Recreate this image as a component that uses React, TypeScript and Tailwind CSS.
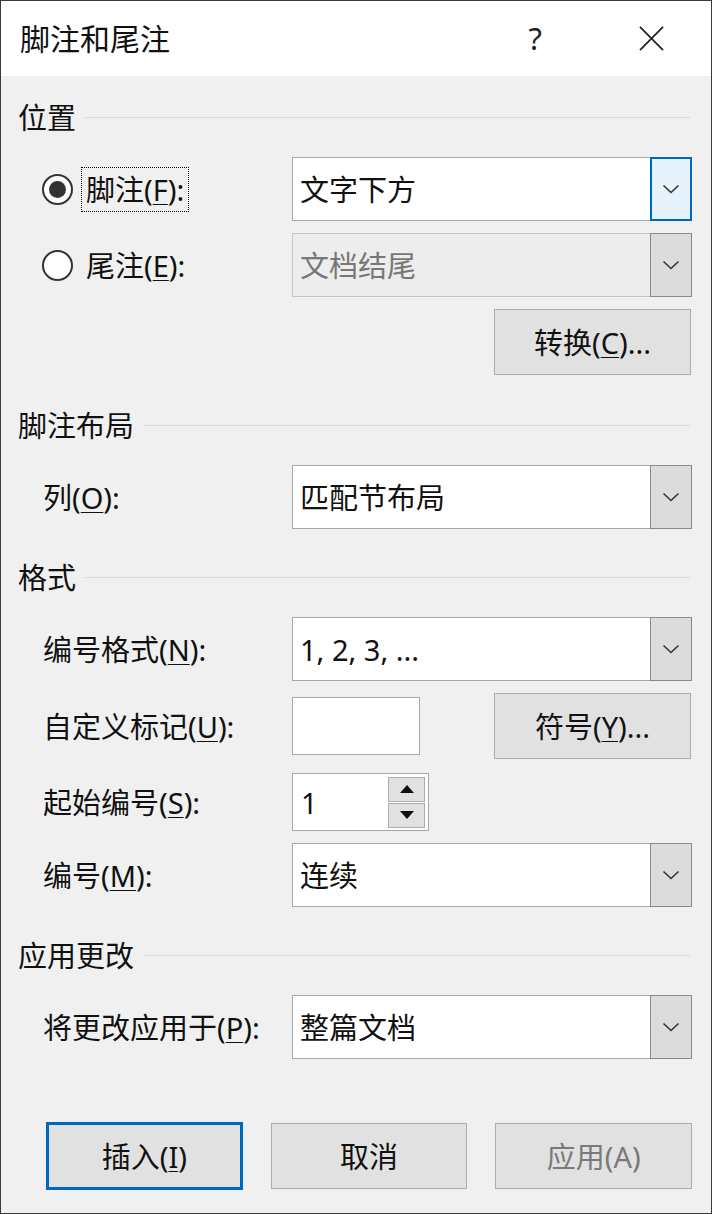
import React from 'react';

const Mn = ({ c }: { c: string }) => <span className="underline underline-offset-[3px] decoration-1">{c}</span>;

const Chevron = () => (
    <svg width="18" height="10" viewBox="0 0 18 10" fill="none">
        <path d="M1.5 1.5 L9 8.5 L16.5 1.5" stroke="#333" strokeWidth="1.6" />
    </svg>
);

const Header = ({ title, className }: { title: string; className?: string }) => (
    <div className={`flex items-center h-[40px] ${className ?? ''}`}>
        <span className="whitespace-nowrap">{title}</span>
        <div className="flex-1 h-px bg-[#d9d9d9] ml-[9px] mr-[2px]" />
    </div>
);

const Select = ({ value, disabled, active }: { value: string; disabled?: boolean; active?: boolean }) => (
    <div className={`flex w-[400px] h-[64px] border ${disabled ? 'border-[#c4c4c4] bg-[#ededed]' : 'border-[#a8a8a8] bg-white'}`}>
        <div className={`flex-1 flex items-center pl-[7px] ${disabled ? 'text-[#777]' : 'text-[#111]'}`}>{value}</div>
        {active ? (
            <div className="w-[42px] -my-px -mr-px flex items-center justify-center bg-[#e5f1fb] border-2 border-[#0067c0]">
                <Chevron />
            </div>
        ) : (
            <div className="w-[42px] -my-px -mr-px flex items-center justify-center bg-[#dcdcdc] border border-[#8a8a8a]">
                <Chevron />
            </div>
        )}
    </div>
);

const Row = ({ label, children, className }: { label: React.ReactNode; children: React.ReactNode; className?: string }) => (
    <div className={`flex items-center ${className ?? ''}`}>
        <div className="w-[274px] pl-[25px] whitespace-nowrap">{label}</div>
        {children}
    </div>
);

const Btn = ({ children, className }: { children: React.ReactNode; className?: string }) => (
    <div className={`w-[197px] h-[66px] flex items-center justify-center bg-[#e1e1e1] border border-[#adadad] ${className ?? ''}`}>
        {children}
    </div>
);

export default function App() {
    return (
        <div className="w-[712px] h-[1214px] border border-[#3a3a3a] bg-[#f0f0f0] flex flex-col text-[29px] leading-none text-[#111] font-['Noto_Sans','Noto_Sans_CJK_SC',sans-serif]">
            {/* title bar */}
            <div className="h-[75px] bg-white flex items-center pl-[19px] pr-[47px]">
                <span className="text-[30px] flex-1">脚注和尾注</span>
                <span className="text-[31px] mr-[97px] text-[#222]">?</span>
                <svg width="25" height="25" viewBox="0 0 26 26">
                    <path d="M1 1 L25 25 M25 1 L1 25" stroke="#222" strokeWidth="1.8" />
                </svg>
            </div>

            <div className="flex flex-col pl-[17px] pr-[19px]">
                <Header title="位置" className="mt-[21px]" />

                <div className="flex items-center mt-[20px]">
                    <div className="w-[274px] pl-[24px] flex items-center">
                        <div className="w-[31px] h-[31px] rounded-full border-2 border-[#333] bg-white flex items-center justify-center">
                            <div className="w-[17px] h-[17px] rounded-full bg-[#333]" />
                        </div>
                        <span className="ml-[8px] px-[4px] py-[7px] border border-dotted border-black">脚注(<Mn c="F" />):</span>
                    </div>
                    <Select value="文字下方" active />
                </div>

                <div className="flex items-center mt-[12px]">
                    <div className="w-[274px] pl-[24px] flex items-center">
                        <div className="w-[31px] h-[31px] rounded-full border-2 border-[#333] bg-white" />
                        <span className="ml-[13px]">尾注(<Mn c="E" />):</span>
                    </div>
                    <Select value="文档结尾" disabled />
                </div>

                <div className="flex justify-end mt-[12px] pr-px">
                    <Btn>转换(<Mn c="C" />)...</Btn>
                </div>

                <Header title="脚注布局" className="mt-[30px]" />
                <Row label={<>列(<Mn c="O" />):</>} className="mt-[20px]">
                    <Select value="匹配节布局" />
                </Row>

                <Header title="格式" className="mt-[28px]" />
                <Row label={<>编号格式(<Mn c="N" />):</>} className="mt-[20px]">
                    <Select value="1, 2, 3, ..." />
                </Row>

                <Row label={<>自定义标记(<Mn c="U" />):</>} className="mt-[12px]">
                    <div className="flex-1 flex items-center">
                        <div className="w-[128px] h-[58px] bg-white border border-[#a8a8a8]" />
                        <div className="flex-1" />
                        <Btn className="mr-px">符号(<Mn c="Y" />)...</Btn>
                    </div>
                </Row>

                <Row label={<>起始编号(<Mn c="S" />):</>} className="mt-[14px]">
                    <div className="w-[137px] h-[58px] bg-white border border-[#a8a8a8] flex items-center">
                        <span className="flex-1 pl-[8px]">1</span>
                        <div className="flex flex-col w-[37px] mr-[3px] gap-px">
                            <div className="h-[25px] bg-[#e1e1e1] border border-[#adadad] flex items-center justify-center">
                                <svg width="14" height="8" viewBox="0 0 14 8"><path d="M0 8 L7 0 L14 8 Z" fill="#111" /></svg>
                            </div>
                            <div className="h-[25px] bg-[#e1e1e1] border border-[#adadad] flex items-center justify-center">
                                <svg width="14" height="8" viewBox="0 0 14 8"><path d="M0 0 L14 0 L7 8 Z" fill="#111" /></svg>
                            </div>
                        </div>
                    </div>
                </Row>

                <Row label={<>编号(<Mn c="M" />):</>} className="mt-[12px]">
                    <Select value="连续" />
                </Row>

                <Header title="应用更改" className="mt-[28px]" />
                <Row label={<>将更改应用于(<Mn c="P" />):</>} className="mt-[20px]">
                    <Select value="整篇文档" />
                </Row>

                <div className="flex items-center mt-[63px] pl-[28px] gap-[28px]">
                    <div className="w-[197px] h-[68px] flex items-center justify-center bg-[#e1e1e1] border-[3px] border-[#0067c0]">
                        插入(<Mn c="I" />)
                    </div>
                    <Btn>取消</Btn>
                    <Btn className="text-[#7a7a7a]">应用(A)</Btn>
                </div>
            </div>
        </div>
    );
}
